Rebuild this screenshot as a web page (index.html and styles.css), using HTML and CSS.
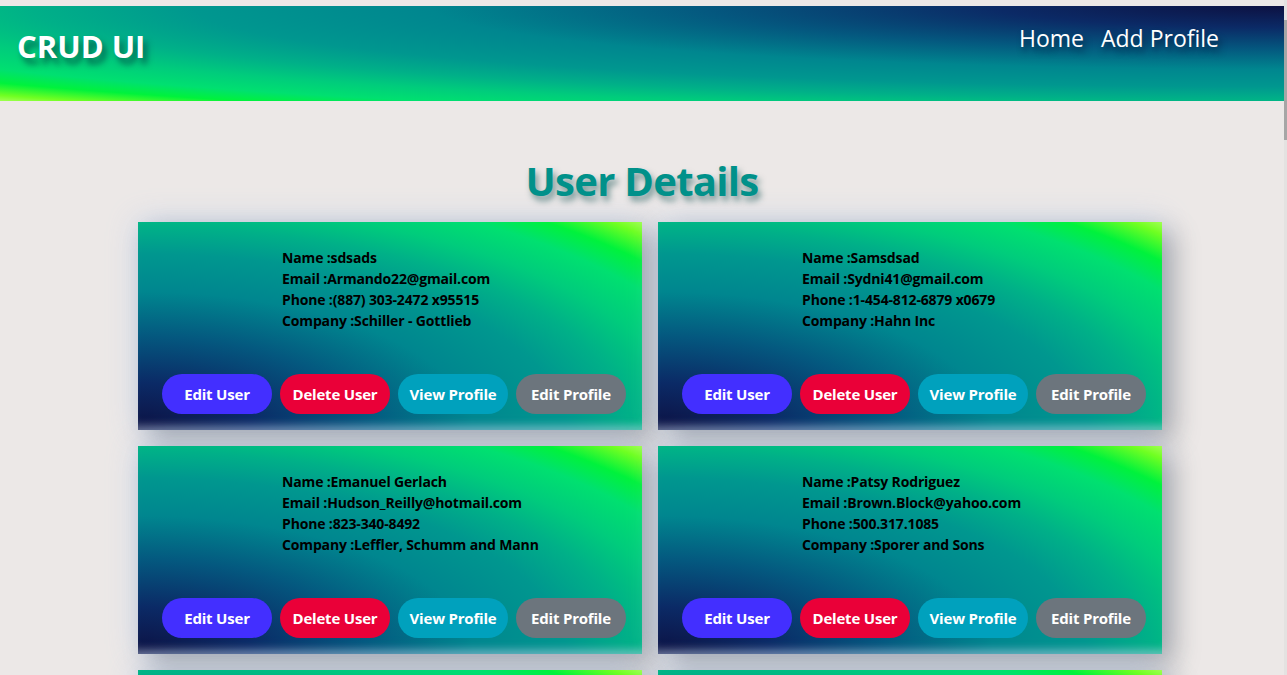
FILE: index.html
```html
<!DOCTYPE html>
<html lang="en">
<head>
<meta charset="utf-8">
<title>CRUD UI</title>
<link rel="stylesheet" href="styles.css">
</head>
<body>
<header class="topbar">
  <div class="brand">CRUD UI</div>
  <nav class="nav">
    <a class="nav-link" href="#">Home</a>
    <a class="nav-link" href="#">Add Profile</a>
  </nav>
</header>
<main class="page">
  <h1 class="title">User Details</h1>
  <section class="grid">
    <article class="card">
      <div class="info">
        <p>Name :sdsads</p>
        <p>Email :Armando22@gmail.com</p>
        <p>Phone :(887) 303-2472 x95515</p>
        <p>Company :Schiller - Gottlieb</p>
      </div>
      <div class="actions">
        <button class="btn btn-edit">Edit User</button>
        <button class="btn btn-delete">Delete User</button>
        <button class="btn btn-view">View Profile</button>
        <button class="btn btn-profile">Edit Profile</button>
      </div>
    </article>
    <article class="card">
      <div class="info">
        <p>Name :Samsdsad</p>
        <p>Email :Sydni41@gmail.com</p>
        <p>Phone :1-454-812-6879 x0679</p>
        <p>Company :Hahn Inc</p>
      </div>
      <div class="actions">
        <button class="btn btn-edit">Edit User</button>
        <button class="btn btn-delete">Delete User</button>
        <button class="btn btn-view">View Profile</button>
        <button class="btn btn-profile">Edit Profile</button>
      </div>
    </article>
    <article class="card">
      <div class="info">
        <p>Name :Emanuel Gerlach</p>
        <p>Email :Hudson_Reilly@hotmail.com</p>
        <p>Phone :823-340-8492</p>
        <p>Company :Leffler, Schumm and Mann</p>
      </div>
      <div class="actions">
        <button class="btn btn-edit">Edit User</button>
        <button class="btn btn-delete">Delete User</button>
        <button class="btn btn-view">View Profile</button>
        <button class="btn btn-profile">Edit Profile</button>
      </div>
    </article>
    <article class="card">
      <div class="info">
        <p>Name :Patsy Rodriguez</p>
        <p>Email :Brown.Block@yahoo.com</p>
        <p>Phone :500.317.1085</p>
        <p>Company :Sporer and Sons</p>
      </div>
      <div class="actions">
        <button class="btn btn-edit">Edit User</button>
        <button class="btn btn-delete">Delete User</button>
        <button class="btn btn-view">View Profile</button>
        <button class="btn btn-profile">Edit Profile</button>
      </div>
    </article>
    <article class="card">
      <div class="info">
        <p>Name :Lela Kuhn</p>
        <p>Email :Lela.Kuhn@gmail.com</p>
        <p>Phone :(412) 555-0198</p>
        <p>Company :Kuhn LLC</p>
      </div>
      <div class="actions">
        <button class="btn btn-edit">Edit User</button>
        <button class="btn btn-delete">Delete User</button>
        <button class="btn btn-view">View Profile</button>
        <button class="btn btn-profile">Edit Profile</button>
      </div>
    </article>
    <article class="card">
      <div class="info">
        <p>Name :Arlo Becker</p>
        <p>Email :Arlo_Becker@yahoo.com</p>
        <p>Phone :1-302-555-0142</p>
        <p>Company :Becker Group</p>
      </div>
      <div class="actions">
        <button class="btn btn-edit">Edit User</button>
        <button class="btn btn-delete">Delete User</button>
        <button class="btn btn-view">View Profile</button>
        <button class="btn btn-profile">Edit Profile</button>
      </div>
    </article>
  </section>
</main>
</body>
</html>
```

FILE: styles.css
```css
html {
  background: #e4e2e1;
}

* {
  box-sizing: border-box;
}

body {
  margin: 0 3px 0 0;
  padding-top: 6px;
  background: #ece8e7;
  font-family: "Open Sans", "Noto Sans", sans-serif;
  color: #000;
}

/* scrollbar thumb overlay */
body::after {
  content: "";
  position: fixed;
  top: 20px;
  right: 0;
  width: 3px;
  height: 120px;
  background: #a6a6a6;
}

.topbar {
  height: 95px;
  display: flex;
  justify-content: space-between;
  align-items: flex-start;
  padding: 0 65px 0 17px;
  background: radial-gradient(141.42% 141.42% at 100% 0%,
    #0d1142 0%, #0b2a66 16%, #04587f 32%, #00868f 47%, #00978f 60%,
    #00b088 69%, #00cc7c 77%, #00e070 85%, #00f23c 91%, #70ff22 97%, #a0ff50 100%);
}

.brand {
  margin-top: 24px;
  font-size: 31px;
  line-height: 32px;
  font-weight: 700;
  color: #fff;
  text-shadow: 4px 6px 6px rgba(0, 40, 50, 0.6);
}

.nav {
  display: flex;
  gap: 17px;
  margin-top: 21px;
}

.nav-link {
  font-size: 23px;
  line-height: 23px;
  color: #fff;
  text-decoration: none;
  text-shadow: 3px 5px 6px rgba(0, 10, 40, 0.55);
}

.page {
  padding-top: 56px;
}

.title {
  margin: 0 0 17px;
  text-align: center;
  font-size: 40px;
  line-height: 48px;
  font-weight: 700;
  letter-spacing: -0.7px;
  color: #00918a;
  text-shadow: 3px 5px 6px rgba(0, 70, 70, 0.5);
}

.grid {
  width: 1040px;
  margin: 0 auto;
  padding-left: 16px;
  display: grid;
  grid-template-columns: 1fr 1fr;
  gap: 16px;
}

.card {
  height: 208px;
  display: flex;
  flex-direction: column;
  padding: 25px 16px 16px 24px;
  background: radial-gradient(141.42% 141.42% at 0% 100%,
    #0d1142 0%, #0b2a66 16%, #04587f 32%, #00868f 47%, #00978f 60%,
    #00b088 69%, #00cc7c 77%, #00e070 85%, #00f23c 91%, #70ff22 97%, #a0ff50 100%);
  box-shadow: inset 0 -10px 8px -6px rgba(200, 215, 235, 0.5),
    12px 10px 25px rgba(0, 0, 0, 0.25),
    0 0 28px rgba(160, 195, 245, 0.45);
}

.info {
  padding-left: 120px;
}

.info p {
  margin: 0;
  font-size: 14px;
  line-height: 21px;
  font-weight: 700;
  letter-spacing: -0.15px;
  color: #000;
}

.actions {
  margin-top: auto;
  display: flex;
  gap: 8px;
}

.btn {
  width: 110px;
  height: 40px;
  border: none;
  border-radius: 20px;
  padding: 0;
  font-family: "Open Sans", "Noto Sans", sans-serif;
  font-size: 15px;
  font-weight: 700;
  letter-spacing: -0.2px;
  color: #fff;
}

.btn-edit {
  background: #432fff;
}

.btn-delete {
  background: #ea0038;
}

.btn-view {
  background: #00a1bd;
}

.btn-profile {
  background: #6c757d;
}
```
